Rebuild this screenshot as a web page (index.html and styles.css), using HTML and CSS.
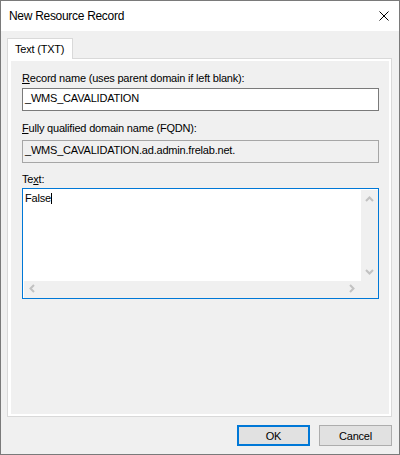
FILE: index.html
```html
<!DOCTYPE html>
<html>
<head>
<meta charset="utf-8">
<link rel="stylesheet" href="styles.css">
</head>
<body>
<div class="window">
  <div class="titlebar">
    <span class="title">New Resource Record</span>
    <svg class="close" width="10" height="10" viewBox="0 0 10 10"><path d="M0.5 0.5 L9.5 9.5 M9.5 0.5 L0.5 9.5" stroke="#000" stroke-width="1" fill="none"/></svg>
  </div>
  <div class="main">
    <div class="tab">Text (TXT)</div>
    <div class="panel">
      <div class="page">
        <div class="lbl lbl-1"><u>R</u>ecord name (uses parent domain if left blank):</div>
        <div class="edit edit-1">_WMS_CAVALIDATION</div>
        <div class="lbl lbl-2"><u>F</u>ully qualified domain name (FQDN):</div>
        <div class="edit edit-ro">_WMS_CAVALIDATION.ad.admin.frelab.net.</div>
        <div class="lbl lbl-3">Te<u>x</u>t:</div>
        <div class="textarea">
          <div class="ta-main">
            <div class="ta-text">False<span class="caret"></span></div>
            <div class="vscroll">
              <svg width="17" height="17" viewBox="0 0 17 17"><polyline points="5,11 8.5,7.5 12,11" stroke="#c2c2c2" stroke-width="2" fill="none"/></svg>
              <svg width="17" height="17" viewBox="0 0 17 17"><polyline points="5,6 8.5,9.5 12,6" stroke="#c2c2c2" stroke-width="2" fill="none"/></svg>
            </div>
          </div>
          <div class="ta-bottom">
            <div class="hscroll">
              <svg width="17" height="17" viewBox="0 0 17 17"><polyline points="10,4 6.5,7.5 10,11" stroke="#c2c2c2" stroke-width="2" fill="none"/></svg>
              <svg width="17" height="17" viewBox="0 0 17 17"><polyline points="6,4 9.5,7.5 6,11" stroke="#c2c2c2" stroke-width="2" fill="none"/></svg>
            </div>
            <div class="corner"></div>
          </div>
        </div>
      </div>
    </div>
    <div class="buttons">
      <button class="btn btn-default">OK</button>
      <button class="btn">Cancel</button>
    </div>
  </div>
</div>
</body>
</html>
```

FILE: styles.css
```css
* { box-sizing: border-box; }
html, body { margin: 0; padding: 0; }
body {
  font-family: "Liberation Sans", Arial, sans-serif;
  font-size: 11px;
  letter-spacing: -0.2px;
  color: #000;
  background: #f0f0f0;
}
.window {
  width: 400px;
  height: 455px;
  border: 1px solid #7a7a7a;
  background: #f0f0f0;
  display: flex;
  flex-direction: column;
}
.titlebar {
  flex: none;
  height: 30px;
  background: #fff;
  display: flex;
  align-items: center;
  padding: 0 10px 0 8px;
}
.title {
  font-size: 12px;
  letter-spacing: -0.3px;
  line-height: 30px;
}
.close { margin-left: auto; display: block; }
.main {
  padding: 7px 7px 0 6px;
  display: flex;
  flex-direction: column;
}
.tab {
  position: relative;
  z-index: 1;
  width: 66px;
  height: 21px;
  margin-bottom: -1px;
  border: 1px solid #d9d9d9;
  border-bottom: none;
  background: #fff;
  padding-left: 7px;
  line-height: 20px;
}
.panel {
  height: 359px;
  border: 1px solid #d9d9d9;
  background: #fff;
  padding: 2px 2px 2px 3px;
}
.page {
  height: 100%;
  background: #f0f0f0;
  padding: 11px 0 0 11px;
  display: flex;
  flex-direction: column;
  align-items: flex-start;
}
.lbl { height: 13px; line-height: 13px; white-space: nowrap; }
.lbl-2 { margin-top: 11px; }
.lbl-3 { margin-top: 10px; }
.edit {
  width: 357px;
  height: 23px;
  border: 1px solid #7a7a7a;
  background: #fff;
  padding: 1px 2px 0;
  line-height: 16px;
  white-space: nowrap;
  margin-top: 3px;
}
.edit-ro {
  margin-top: 5px;
  background: #f0f0f0;
  border-color: #a6a6a6;
}
.textarea {
  margin-top: 2px;
  width: 357px;
  height: 111px;
  border: 1px solid #0078d7;
  padding: 1px 0 0 1px;
  background: #fff;
  display: flex;
  flex-direction: column;
}
.ta-main { flex: 1; display: flex; min-height: 0; }
.ta-text {
  flex: 1;
  padding: 0 0 0 1px;
  line-height: 16px;
}
.caret {
  display: inline-block;
  width: 1px;
  height: 11px;
  background: #000;
  vertical-align: -2px;
}
.vscroll {
  width: 17px;
  background: #f0f0f0;
  display: flex;
  flex-direction: column;
  justify-content: space-between;
}
.vscroll svg, .hscroll svg { display: block; }
.ta-bottom { height: 17px; display: flex; flex: none; }
.hscroll {
  flex: 1;
  background: #f0f0f0;
  display: flex;
  justify-content: space-between;
}
.corner { width: 17px; background: #f0f0f0; }
.buttons {
  display: flex;
  justify-content: flex-end;
  gap: 9px;
  margin-top: 8px;
}
.btn {
  width: 73px;
  height: 21px;
  padding: 0;
  margin: 0;
  background: #e1e1e1;
  border: 1px solid #adadad;
  font: inherit;
  letter-spacing: inherit;
  color: #000;
}
.btn-default { border: 2px solid #0078d7; }
```
